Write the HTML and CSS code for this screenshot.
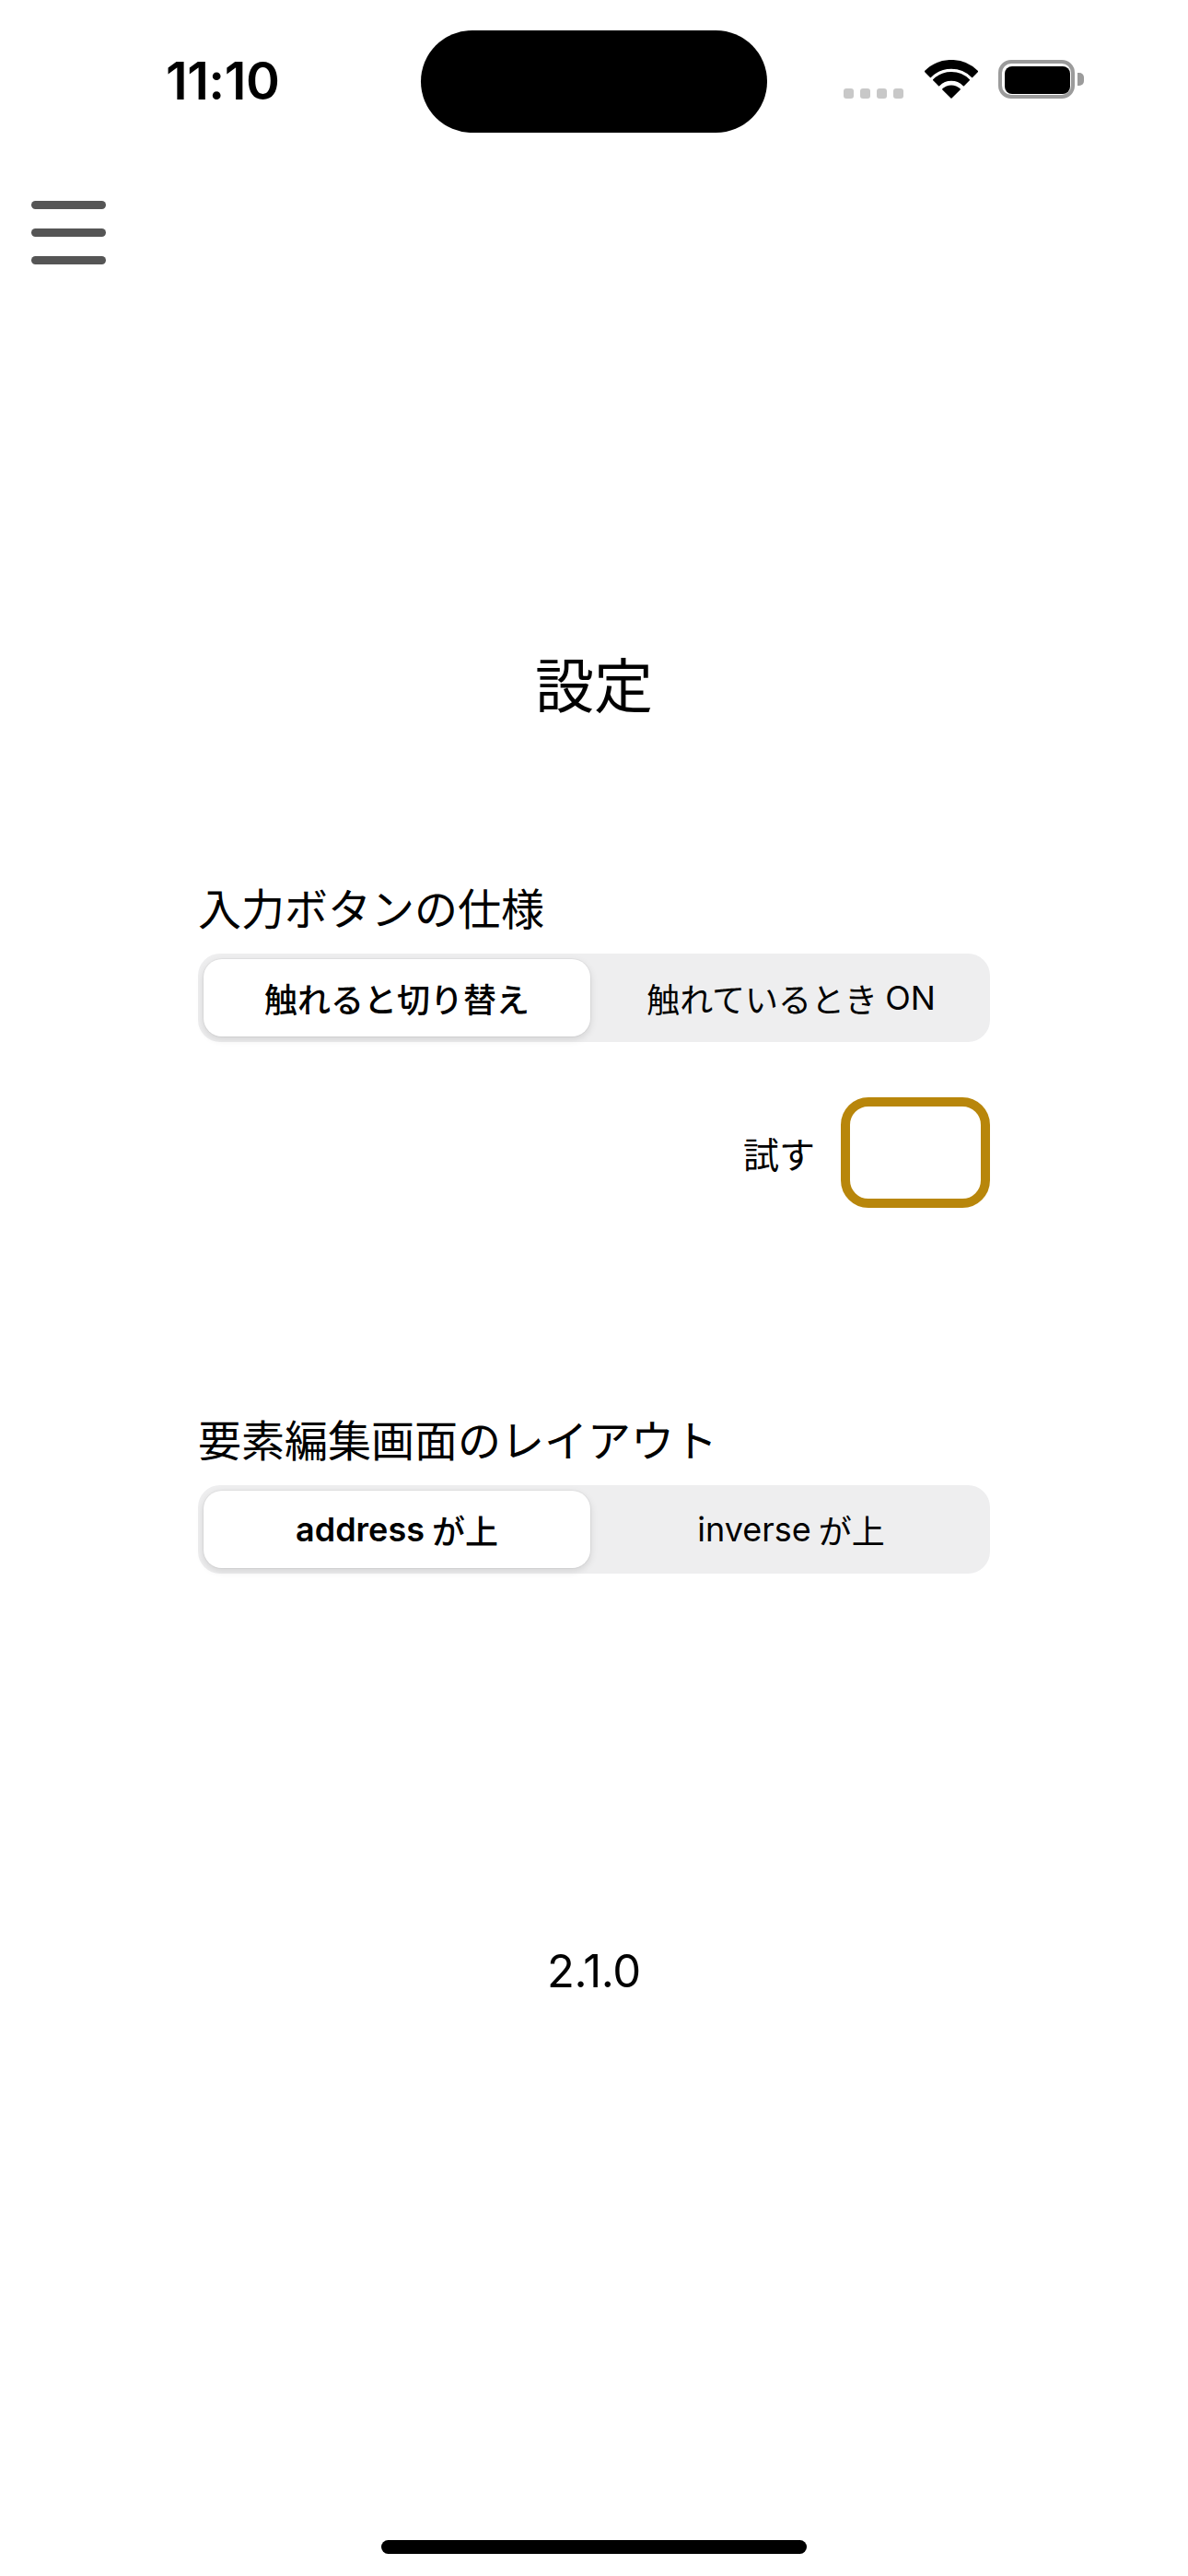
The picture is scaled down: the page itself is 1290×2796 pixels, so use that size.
FILE: index.html
```html
<!DOCTYPE html>
<html lang="ja">
<head>
<meta charset="utf-8">
<title>設定</title>
<link rel="stylesheet" href="styles.css">
</head>
<body>
<div class="screen">
  <header class="status-bar">
    <div class="time">11:10</div>
    <div class="island"></div>
    <div class="status-icons">
      <div class="signal">
        <span class="dot"></span><span class="dot"></span><span class="dot"></span><span class="dot"></span>
      </div>
      <svg class="wifi" width="58" height="42" viewBox="0 0 58 42">
        <path d="M0.5 12.5 A40.3 40.3 0 0 1 57.5 12.5 L51.6 18.4 A32 32 0 0 0 6.4 18.4 Z" fill="#000" stroke="#000" stroke-width="1.5" stroke-linejoin="round"/>
        <path d="M9.7 21.7 A27.3 27.3 0 0 1 48.3 21.7 L42.4 27.6 A19 19 0 0 0 15.6 27.6 Z" fill="#000" stroke="#000" stroke-width="1.5" stroke-linejoin="round"/>
        <path d="M19.9 31.9 A13 13 0 0 1 38.1 31.9 L29 41 Z" fill="#000" stroke="#000" stroke-width="1.5" stroke-linejoin="round"/>
      </svg>
      <svg class="battery" width="94" height="42" viewBox="0 0 94 42">
        <rect x="2" y="2" width="79" height="38" rx="12" ry="12" fill="none" stroke="#9b9b9b" stroke-width="4"/>
        <rect x="7" y="7" width="71" height="30" rx="8" ry="8" fill="#000"/>
        <path d="M86 14 h2 a5 5 0 0 1 5 5 v4 a5 5 0 0 1 -5 5 h-2 Z" fill="#9b9b9b"/>
      </svg>
    </div>
  </header>

  <button class="menu-button" aria-label="メニュー">
    <span class="bar"></span>
    <span class="bar"></span>
    <span class="bar"></span>
  </button>

  <main class="content">
    <h1 class="title">設定</h1>

    <section class="setting first">
      <h2 class="label">入力ボタンの仕様</h2>
      <div class="segmented">
        <div class="segment selected">触れると切り替え</div>
        <div class="segment">触れているとき<span class="latin-after">ON</span></div>
      </div>
      <div class="try-row">
        <span class="try-label">試す</span>
        <div class="try-box"></div>
      </div>
    </section>

    <section class="setting second">
      <h2 class="label">要素編集画面のレイアウト</h2>
      <div class="segmented">
        <div class="segment selected"><span class="latin-before">address</span>が上</div>
        <div class="segment"><span class="latin-before">inverse</span>が上</div>
      </div>
    </section>

    <div class="version">2.1.0</div>
  </main>

  <div class="home-indicator"></div>
</div>
</body>
</html>
```

FILE: styles.css
```css
* {
  box-sizing: border-box;
}

html, body {
  margin: 0;
  padding: 0;
  background: #ffffff;
}

body {
  font-family: "Noto Sans CJK JP", "Noto Sans", sans-serif;
  color: #000;
}

.screen {
  position: relative;
  width: 1290px;
  height: 2796px;
  overflow: hidden;
  background: #fff;
}

/* Status bar */
.status-bar {
  display: flex;
  align-items: center;
  height: 176px;
}

.time {
  box-sizing: content-box;
  width: 97px;
  padding-left: 180px;
  margin-right: 180px;
  font-family: Inter, "Liberation Sans", sans-serif;
  font-weight: 600;
  font-size: 56px;
  line-height: 1;
  letter-spacing: -0.5px;
  white-space: nowrap;
}

.island {
  width: 376px;
  height: 111px;
  border-radius: 56px;
  background: #000;
}

.status-icons {
  display: flex;
  align-items: flex-end;
  margin-left: 83px;
  margin-bottom: 4px;
}

.signal {
  display: flex;
  gap: 7px;
  margin-right: 23px;
}

.dot {
  width: 11px;
  height: 11px;
  border-radius: 3px;
  background: #c8c8c8;
}

.wifi {
  display: block;
  margin-right: 22px;
}

.battery {
  display: block;
}

/* Menu button */
.menu-button {
  display: flex;
  flex-direction: column;
  gap: 21px;
  margin: 42px 0 0 34px;
  padding: 0;
  border: 0;
  background: none;
}

.bar {
  display: block;
  width: 81px;
  height: 9px;
  border-radius: 5px;
  background: #555555;
}

/* Content */
.content {
  width: 860px;
  margin: 0 auto;
}

.title {
  margin: 421px 0 0;
  font-size: 64px;
  line-height: 64px;
  font-weight: 400;
  text-align: center;
}

.setting.first {
  margin-top: 188px;
}

.setting.second {
  margin-top: 226px;
}

.label {
  margin: 0;
  font-size: 47px;
  line-height: 47px;
  font-weight: 400;
  white-space: nowrap;
}

.segmented {
  display: grid;
  grid-template-columns: 1fr 1fr;
  gap: 8px;
  height: 96px;
  margin-top: 28px;
  padding: 6px;
  border-radius: 24px;
  background: #eeeeef;
}

.segment {
  display: flex;
  align-items: center;
  justify-content: center;
  border-radius: 20px;
  font-family: Inter, "Noto Sans CJK JP", sans-serif;
  font-size: 36px;
  font-weight: 400;
  white-space: nowrap;
  color: #000;
}

.segment.selected {
  background: #fff;
  font-weight: 500;
  box-shadow: 0 3px 8px rgba(0, 0, 0, 0.12), 0 0 0 1px rgba(0, 0, 0, 0.04);
}

.segment.selected .latin-before {
  font-weight: 600;
}

.latin-before {
  margin-right: 8px;
}

.latin-after {
  margin-left: 8px;
}

.try-row {
  display: flex;
  align-items: center;
  justify-content: flex-end;
  gap: 28px;
  margin-top: 60px;
}

.try-label {
  font-size: 39px;
  line-height: 1;
}

.try-box {
  width: 162px;
  height: 120px;
  border: 10px solid #b8860b;
  border-radius: 30px;
  background: #fff;
}

.version {
  margin-top: 407px;
  font-family: Inter, "Liberation Sans", sans-serif;
  font-size: 49px;
  line-height: 49px;
  letter-spacing: -0.3px;
  text-align: center;
}

.home-indicator {
  position: absolute;
  left: 414px;
  bottom: 24px;
  width: 462px;
  height: 15px;
  border-radius: 8px;
  background: #000;
}
```
